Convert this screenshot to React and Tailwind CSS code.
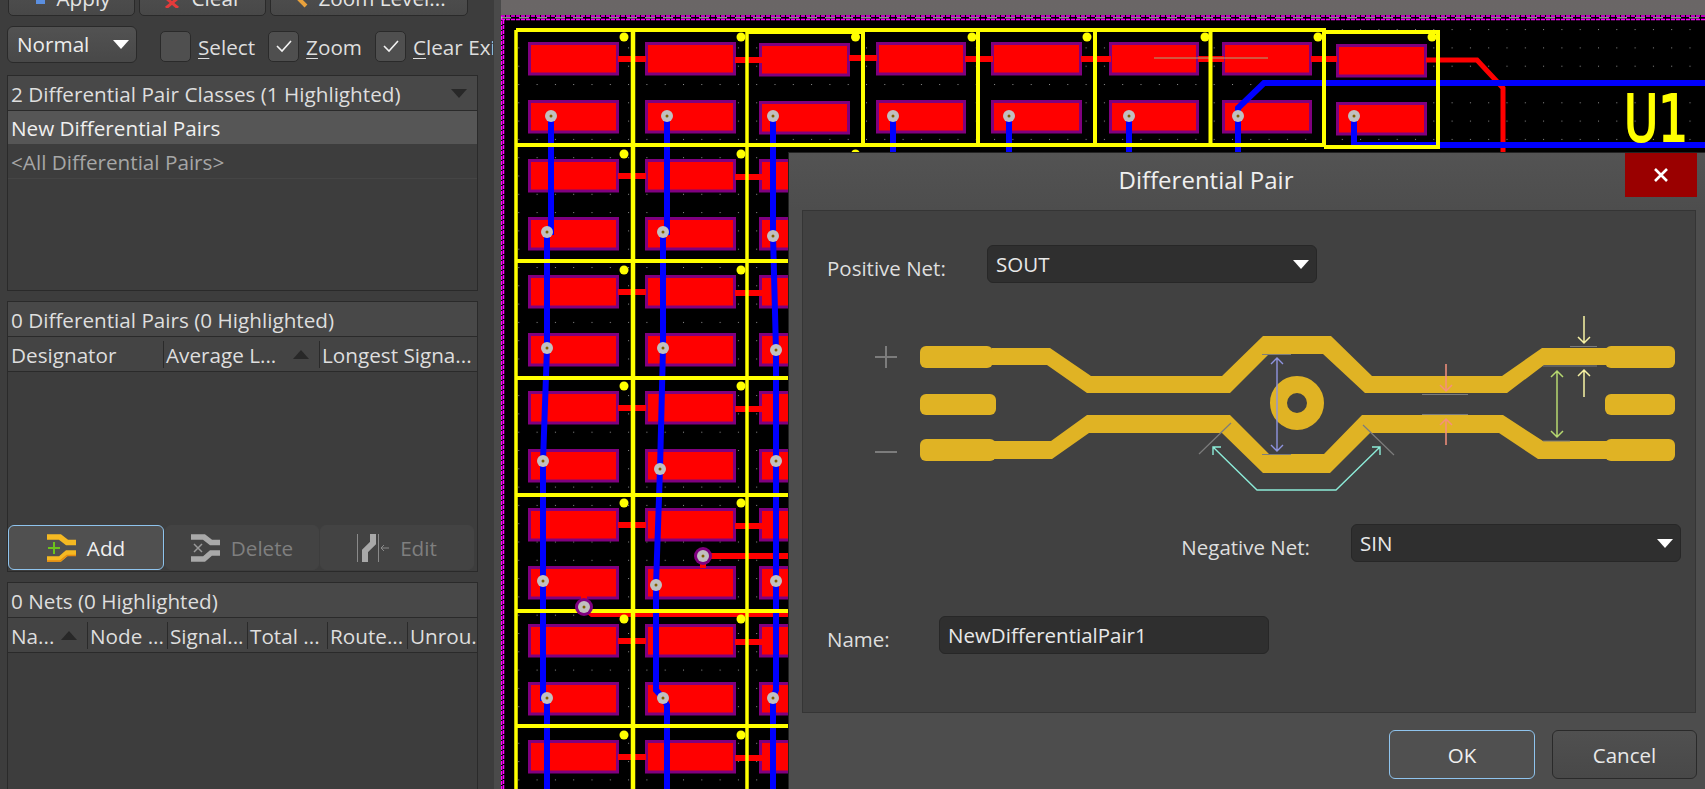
import React from "react";

const FONT = { fontFamily: '"Open Sans", "Noto Sans", sans-serif' };

const COLS = [
  [528, 619], [645, 736], [759, 850], [876, 966], [991, 1082], [1109, 1199], [1222, 1312], [1336, 1427],
];
const ROWS = [42, 159, 275, 391, 508, 624, 740];
const V_LINES = [516, 633, 747];
const H_LINES = [145, 261, 378, 495, 611, 726];
const DOT_X = [624, 741, 855.5];
const VIAS = [
  [551, 116], [667, 116], [773, 116], [893, 116], [1009, 116], [1129, 116], [1238, 116], [1354, 116],
  [547, 232], [663, 232], [773, 236], [547, 348], [663, 348], [776, 350],
  [543, 461], [660, 469], [776, 461], [543, 581], [656, 585], [776, 581],
  [547, 698], [663, 698], [773, 698], [584, 607], [703, 556],
];
const BLUE = [
  "551,116 551,232 547,232 547,348 543,461 543,698 547,698 547,789",
  "667,116 667,232 663,232 663,348 660,469 656,585 656,690 663,698 667,705 667,789",
  "773,116 773,236 776,350 776,581 776,690 773,698 773,789",
  "893,116 893,152", "1009,116 1009,152", "1129,116 1129,152",
  "1238,152 1238,108 1264,83 1705,83",
  "1354,116 1354,145 1705,145",
];

function Board() {
  return (
    <svg className="absolute left-0 top-0" width="1705" height="789" viewBox="0 0 1705 789">
      <defs>
        <pattern id="grid" x="518.3" y="10.8" width="18.3" height="18.3" patternUnits="userSpaceOnUse">
          <rect width="1" height="1" fill="#8f8f8f" />
        </pattern>
      </defs>
      <rect x="500" y="15" width="1205" height="774" fill="#000" />
      <rect x="505" y="22" width="1200" height="767" fill="url(#grid)" />
      <path d="M501 16H1705M501 19.500H1705M501.500 16V789M503.500 20V789" stroke="#ff00ff" strokeWidth="1.500" strokeDasharray="4 1" fill="none" />
      <path d="M501 17.800H1705" stroke="#c4c4c4" strokeWidth="1" strokeDasharray="10 8" />
      {ROWS.map((top, r) =>
        COLS.slice(0, r === 0 ? 8 : 3).map(([a, b], c) => {
          const off = r === 0 && c === 7 ? 2 : r === 0 && c === 2 ? 1 : 0;
          return (
            <g key={`${r}-${c}`}>
              <rect x={a + 1.5} y={top + off + 1.5} width={b - a - 3} height="30.500" fill="#ff0000" stroke="#800080" strokeWidth="3" />
              <rect x={a + 1.5} y={top + off + 59.5} width={b - a - 3} height="30.500" fill="#ff0000" stroke="#800080" strokeWidth="3" />
            </g>
          );
        })
      )}
      {ROWS.map((top, r) => (
        <g key={r} fill="#ff0000">
          <rect x="618" y={top + 14} width="28" height="6" />
          <rect x="735" y={top + 15} width="28" height="6" />
        </g>
      ))}
      <g fill="#ff0000">
        <rect x="849" y="55" width="28" height="6" />
        <rect x="965" y="56" width="28" height="6" />
        <rect x="1081" y="56" width="30" height="6" />
        <rect x="1198" y="56" width="26" height="6" />
        <rect x="1311" y="56" width="26" height="6" />
        <rect x="581" y="595" width="6" height="12" />
        <rect x="700" y="560" width="6" height="8" />
        <rect x="703" y="553" width="90" height="6" />
      </g>
      <path d="M586 609L592 614H793" stroke="#ff0000" strokeWidth="6" fill="none" />
      <path d="M1426 60H1477L1503 88V152" stroke="#ff0000" strokeWidth="5" fill="none" />
      <path d="M1154 58H1268" stroke="#a9a97a" strokeWidth="1" />
      {BLUE.map((p) => (
        <polyline key={p} points={p} fill="none" stroke="#0000ff" strokeWidth="6" />
      ))}
      <g stroke="#ffff00" strokeWidth="4" fill="none">
        {V_LINES.map((x) => (
          <path key={x} d={`M${x} 30V789`} strokeWidth={x === 633 ? 4.5 : 3.5} />
        ))}
        {H_LINES.map((y) => (
          <path key={y} d={`M516 ${y}H793`} />
        ))}
        <path d="M516 30H863M863 30V145M748 32H863" />
        <path d="M863 30H1324V145H793" />
        <path d="M978 30V145M1095 30V145M1210.500 30V145" />
        <path d="M1324 32H1438V147H1324" />
      </g>
      <g fill="#ffff00">
        {ROWS.map((top, r) =>
          DOT_X.map((x) => <circle key={`${r}-${x}`} cx={x} cy={top - 5} r="4.500" />)
        )}
        {[972, 1087, 1205, 1318, 1432].map((x) => (
          <circle key={x} cx={x} cy="37" r="4.500" />
        ))}
      </g>
      <circle cx="584" cy="607" r="9" fill="#800080" />
      <circle cx="703" cy="556" r="9" fill="#800080" />
      {VIAS.map(([x, y]) => (
        <g key={`${x}-${y}`}>
          <circle cx={x} cy={y} r="6" fill="#c0c0c0" />
          <circle cx={x} cy={y} r="1.500" fill="#806000" />
        </g>
      ))}
      <text x="1624" y="141" fill="#ffff00" stroke="#ffff00" strokeWidth="2" fontSize="64" textLength="64" lengthAdjust="spacingAndGlyphs" fontFamily='"DejaVu Sans", sans-serif'>U1</text>
    </svg>
  );
}

function Caret({ color = "#ffffff", up = false, className = "" }) {
  return (
    <svg width="16" height="9" viewBox="0 0 16 9" className={className}>
      <polygon points={up ? "8,0 16,9 0,9" : "0,0 16,0 8,9"} fill={color} />
    </svg>
  );
}

function TopButton({ w, icon, label }) {
  return (
    <div className={`${w} h-[34px] flex items-center justify-center gap-[10px] rounded-[5px] border border-[#2a2a2a] bg-[linear-gradient(#505050,#484848)] text-[#e4e4e4]`}>
      {icon}
      <span>{label}</span>
    </div>
  );
}

function Check({ checked, label, rest }) {
  return (
    <div className="flex items-center">
      <div className="w-[31px] h-[31px] rounded-[5px] border border-[#2a2a2a] bg-[#4f4f4f] flex items-center justify-center shrink-0">
        {checked && (
          <svg width="16" height="13" viewBox="0 0 16 13">
            <polyline points="1,6 6,11 15,1" fill="none" stroke="#f2f2f2" strokeWidth="1.600" />
          </svg>
        )}
      </div>
      <span className="ml-[7px] text-[#dedede] whitespace-nowrap mt-[2px]">
        <span className="underline underline-offset-[3px] decoration-1">{label}</span>
        {rest}
      </span>
    </div>
  );
}

function HeaderCell({ w, label, first, caret }) {
  return (
    <div className={`${w} h-full relative flex items-center pl-[3px] pt-[3px] overflow-hidden whitespace-nowrap shrink-0`}>
      {!first && <div className="absolute left-0 top-[4px] bottom-[3px] w-px bg-[#2a2a2a]" />}
      <span>{label}</span>
      {caret}
    </div>
  );
}

function AddIcon() {
  return (
    <svg width="29" height="28" viewBox="0 0 29 28">
      <path d="M0 3H13L20 8.500H29" fill="none" stroke="#f5b922" strokeWidth="5.500" />
      <path d="M0 25H13L20 19H29" fill="none" stroke="#f5b922" strokeWidth="5.500" />
      <path d="M0 27H13L20 21.500H29" fill="none" stroke="#e48a12" strokeWidth="1.500" />
      <path d="M7 8V20M1 14H13" stroke="#6cc41c" strokeWidth="2" />
    </svg>
  );
}

function DeleteIcon() {
  return (
    <svg width="29" height="28" viewBox="0 0 29 28">
      <path d="M0 3H13L20 8.500H29" fill="none" stroke="#a9a9a9" strokeWidth="5.500" />
      <path d="M0 25H13L20 19H29" fill="none" stroke="#a9a9a9" strokeWidth="5.500" />
      <path d="M3 10L11 18M11 10L3 18" stroke="#9a9a9a" strokeWidth="1.500" />
    </svg>
  );
}

function EditIcon() {
  return (
    <svg width="32" height="28" viewBox="0 0 32 28">
      <path d="M0.500 0V28M21.500 0V28" stroke="#8a8a8a" strokeWidth="1" />
      <path d="M8 28V17L16 9V0" fill="none" stroke="#a9a9a9" strokeWidth="6" />
      <path d="M32 14H24M27 11L24 14L27 17" fill="none" stroke="#8a8a8a" strokeWidth="1" />
    </svg>
  );
}

function ActionButton({ w, children, active }) {
  return (
    <div className={`${w} h-[45px] flex items-center justify-center gap-[11px] rounded-[6px] border ${active ? "border-[#8fc4ee] bg-[#505050] text-[#f0f0f0]" : "border-[#434343] bg-[#434343] text-[#7f7f7f]"}`}>
      {children}
    </div>
  );
}

function Combo({ w, text }) {
  return (
    <div className={`${w} h-[38px] flex items-center justify-between pl-[8px] pr-[7px] rounded-[6px] border border-[#272727] bg-[#2f2f2f] text-[#e8e8e8]`}>
      <span>{text}</span>
      <Caret />
    </div>
  );
}

function Trace() {
  const top = "992,348 1050,348 1091,376 1222,376 1263,336 1331,336 1372,376 1502,376 1542,348 1610,348 1610,365 1544,365 1507,393 1365,393 1323,354 1269,354 1230,393 1087,393 1047,365 992,365";
  const bottom = "992,441 1051,441 1087,415 1230,415 1269,454 1324,454 1362,415 1503,415 1543,441 1610,441 1610,459 1538,459 1499,433 1370,433 1330,473 1263,473 1222,433 1089,433 1052,459 992,459";
  const gold = "#e0b324";
  return (
    <svg className="block shrink-0" width="892" height="241" viewBox="803 283 892 241">
      <g fill={gold}>
        <polygon points={top} />
        <polygon points={bottom} />
        <rect x="920" y="346" width="73" height="22" rx="6" />
        <rect x="920" y="394" width="76" height="21" rx="6" />
        <rect x="920" y="439" width="76" height="22" rx="6" />
        <rect x="1605" y="346" width="70" height="22" rx="6" />
        <rect x="1605" y="394" width="70" height="21" rx="6" />
        <rect x="1605" y="439" width="70" height="22" rx="6" />
      </g>
      <circle cx="1297" cy="403" r="18.500" fill="none" stroke={gold} strokeWidth="17" />
      <path d="M875 357H897M886 346V368M875 452H897" stroke="#7c7c7c" strokeWidth="2" />
      <g stroke="#7c7c7c" strokeWidth="1.200" fill="none">
        <path d="M1262 354.500H1291M1262 454.500H1291" />
        <path d="M1231 423L1199 454M1363 425L1394 455" />
        <path d="M1422 394.500H1468M1422 414.500H1468" />
        <path d="M1543 366H1597M1543 441H1570M1570 346.500H1597" />
      </g>
      <g stroke="#8f94e0" strokeWidth="1.400" fill="none">
        <path d="M1277 358V451M1271 364L1277 358L1283 364M1271 445L1277 451L1283 445" />
      </g>
      <path d="M1213 447L1257 490H1336L1380 447M1213 455V447H1221M1372 447H1380V455" stroke="#8cebd8" strokeWidth="1.400" fill="none" />
      <g stroke="#f5907c" strokeWidth="1.500" fill="none">
        <path d="M1446 364V391M1440 385L1446 391L1452 385" />
        <path d="M1446 445V419M1440 425L1446 419L1452 425" />
      </g>
      <path d="M1557 371V437M1551 377L1557 371L1563 377M1551 431L1557 437L1563 431" stroke="#b6d870" strokeWidth="1.500" fill="none" />
      <g stroke="#f8f3a4" strokeWidth="1.500" fill="none">
        <path d="M1584 316V343M1578 337L1584 343L1590 337" />
        <path d="M1584 397V370M1578 376L1584 370L1590 376" />
      </g>
    </svg>
  );
}

function Dialog() {
  return (
    <div className="absolute left-[788px] top-[152px] w-[917px] h-[637px] flex flex-col border-l border-t border-[#222222] bg-[#4d4d4d] text-[20.500px] text-[#dedede]">
      <div className="h-[57px] shrink-0 flex items-center justify-center text-[24px] text-[#f0f0f0] relative bg-[linear-gradient(#535353,#4d4d4d)] pb-[3px] pr-[82px]">
        <span>Differential Pair</span>
        <div className="absolute left-[836px] top-0 w-[72px] h-[44px] bg-[#9a0000] flex items-center justify-center">
          <svg width="14" height="14" viewBox="0 0 14 14">
            <path d="M1 1L13 13M13 1L1 13" stroke="#ffffff" strokeWidth="2.600" />
          </svg>
        </div>
      </div>
      <div className="ml-[13px] w-[894px] h-[503px] shrink-0 border border-[#353535] bg-[#414141] flex flex-col">
        <div className="mt-[34px] flex pl-[24px] h-[38px] shrink-0">
          <span className="w-[160px] pt-[8px] leading-[30px]">Positive Net:</span>
          <Combo w="w-[330px]" text="SOUT" />
        </div>
        <Trace />
        <div className="flex justify-end items-start pr-[14px] h-[38px] shrink-0">
          <span className="mr-[41px] pt-[9px] leading-[29px]">Negative Net:</span>
          <Combo w="w-[330px]" text="SIN" />
        </div>
        <div className="mt-[54px] flex pl-[24px] h-[38px] shrink-0">
          <span className="w-[112px] pt-[9px] leading-[29px]">Name:</span>
          <div className="w-[330px] h-[38px] flex items-center pl-[8px] rounded-[6px] border border-[#272727] bg-[#2f2f2f] text-[#e8e8e8]">NewDifferentialPair1</div>
        </div>
      </div>
      <div className="flex justify-end gap-[17px] pr-[8px] pt-[17px]">
        <div className="w-[146px] h-[49px] flex items-center justify-center pt-[2px] rounded-[6px] border border-[#8fc4ee] bg-[#505050] text-[#f0f0f0]">OK</div>
        <div className="w-[145px] h-[49px] flex items-center justify-center pt-[2px] rounded-[6px] border border-[#2a2a2a] bg-[linear-gradient(#505050,#484848)] text-[#e8e8e8]">Cancel</div>
      </div>
    </div>
  );
}

function LeftPanel() {
  return (
    <div className="w-[494px] h-[789px] shrink-0 bg-[#3d3d3d] border-r-[7px] border-[#4a4a4a] box-content overflow-hidden relative z-10 flex flex-col text-[20.700px] text-[#dedede]">
      <div className="flex gap-[4px] pl-[8px] -mt-[18px]">
        <TopButton
          w="w-[127px]"
          label="Apply"
          icon={<svg width="14" height="18" viewBox="0 0 14 18"><rect x="3" y="0" width="9" height="14" fill="#5b8fe0" /></svg>}
        />
        <TopButton
          w="w-[127px]"
          label="Clear"
          icon={<svg width="18" height="18" viewBox="0 0 18 18"><path d="M2 8L14 18M14 8L2 18" stroke="#e23b3b" strokeWidth="3" /></svg>}
        />
        <TopButton
          w="w-[198px]"
          label="Zoom Level..."
          icon={<svg width="16" height="18" viewBox="0 0 16 18"><path d="M2 4L14 16" stroke="#e8a13c" strokeWidth="4" /></svg>}
        />
      </div>
      <div className="mt-[10px] flex items-center pl-[7px] h-[37px]">
        <div className="w-[130px] h-[37px] flex items-center justify-between pl-[9px] pr-[7px] rounded-[6px] border border-[#2a2a2a] bg-[linear-gradient(#525252,#484848)] text-[#ececec] shrink-0">
          <span>Normal</span>
          <Caret />
        </div>
        <div className="ml-[23px] flex gap-[13px] mt-[4px] w-[333px] overflow-hidden">
          <Check label="S" rest="elect" />
          <Check checked label="Z" rest="oom" />
          <Check checked label="C" rest="lear Existing" />
        </div>
      </div>
      <div className="mt-[12px] ml-[7px] w-[471px] h-[216px] shrink-0 border border-[#2a2a2a] flex flex-col">
        <div className="h-[35px] shrink-0 flex items-center justify-between pl-[3px] pt-[3px] pr-[10px] bg-[#484848] border-b border-[#2a2a2a]">
          <span>2 Differential Pair Classes (1 Highlighted)</span>
          <Caret color="#282828" className="mb-[3px]" />
        </div>
        <div className="h-[33px] shrink-0 flex items-center pl-[3px] pt-[2px] bg-[#565656] text-[#f0f0f0]">New Differential Pairs</div>
        <div className="h-[35px] shrink-0 flex items-center pl-[3px] pt-[3px] text-[#a6a6a6] border-b border-[#454545]">&lt;All Differential Pairs&gt;</div>
      </div>
      <div className="mt-[10px] ml-[7px] w-[471px] h-[271px] shrink-0 border border-[#2a2a2a] flex flex-col">
        <div className="h-[35px] shrink-0 flex items-center pl-[3px] pt-[3px] bg-[#484848] border-b border-[#2a2a2a]">0 Differential Pairs (0 Highlighted)</div>
        <div className="h-[35px] shrink-0 flex items-center bg-[#444444] border-b border-[#2a2a2a]">
          <HeaderCell first w="w-[155px]" label="Designator" />
          <HeaderCell
            w="w-[156px]"
            label="Average L..."
            caret={<Caret up color="#282828" className="absolute right-[10px] top-[13px]" />}
          />
          <HeaderCell w="w-[158px]" label="Longest Signa..." />
        </div>
        <div className="flex-1" />
        <div className="flex gap-px pb-px">
          <ActionButton active w="w-[156px]"><AddIcon /><span className="pt-[2px]">Add</span></ActionButton>
          <ActionButton w="w-[154px]"><DeleteIcon /><span className="pt-[2px]">Delete</span></ActionButton>
          <ActionButton w="w-[154px]"><EditIcon /><span className="pt-[2px]">Edit</span></ActionButton>
        </div>
      </div>
      <div className="mt-[10px] ml-[7px] w-[471px] flex-1 border border-b-0 border-[#2a2a2a] flex flex-col">
        <div className="h-[35px] shrink-0 flex items-center pl-[3px] pt-[3px] bg-[#484848] border-b border-[#2a2a2a]">0 Nets (0 Highlighted)</div>
        <div className="h-[35px] shrink-0 flex items-center bg-[#444444] border-b border-[#2a2a2a]">
          <HeaderCell
            first
            w="w-[79px]"
            label="Na..."
            caret={<Caret up color="#282828" className="absolute left-[53px] top-[13px]" />}
          />
          <HeaderCell w="w-[80px]" label="Node ..." />
          <HeaderCell w="w-[80px]" label="Signal..." />
          <HeaderCell w="w-[80px]" label="Total ..." />
          <HeaderCell w="w-[80px]" label="Route..." />
          <HeaderCell w="w-[70px]" label="Unrou.." />
        </div>
      </div>
    </div>
  );
}

export default function App() {
  return (
    <div className="relative w-[1705px] h-[789px] overflow-hidden flex bg-[linear-gradient(#6a6666,#736f6f)]" style={FONT}>
      <LeftPanel />
      <Board />
      <Dialog />
    </div>
  );
}
